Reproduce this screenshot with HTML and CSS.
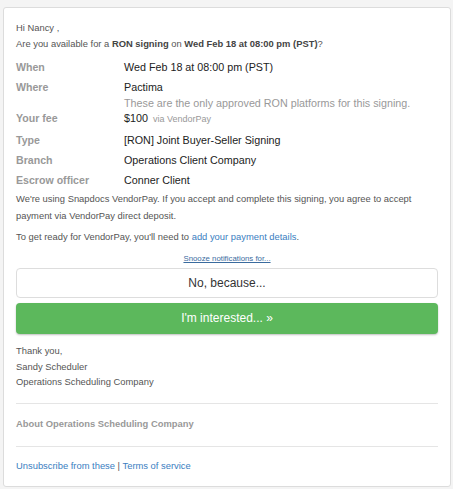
FILE: index.html
```html
<!DOCTYPE html>
<html>
<head>
<meta charset="utf-8">
<link rel="stylesheet" href="styles.css">
</head>
<body>
<div class="card">
  <p class="greet">Hi Nancy ,</p>
  <p class="ask">Are you available for a <b>RON signing</b> on <b>Wed Feb 18 at 08:00 pm (PST)</b>?</p>
  <div class="details">
    <div class="label">When</div><div class="value">Wed Feb 18 at 08:00 pm (PST)</div>
    <div class="label">Where</div><div class="value">Pactima</div>
    <div class="label note-row"></div><div class="note note-row">These are the only approved RON platforms for this signing.</div>
    <div class="label fee-row">Your fee</div><div class="value fee-row">$100 <span class="via">via VendorPay</span></div>
    <div class="label type-row">Type</div><div class="value type-row">[RON] Joint Buyer-Seller Signing</div>
    <div class="label">Branch</div><div class="value">Operations Client Company</div>
    <div class="label">Escrow officer</div><div class="value">Conner Client</div>
  </div>
  <p class="para">We're using Snapdocs VendorPay. If you accept and complete this signing, you agree to accept payment via VendorPay direct deposit.</p>
  <p class="para2">To get ready for VendorPay, you'll need to <a class="link" href="#">add your payment details</a>.</p>
  <div class="snooze"><a href="#">Snooze notifications for...</a></div>
  <div class="btn btn-no">No, because...</div>
  <div class="btn btn-yes">I'm interested... »</div>
  <div class="sign">
    <div>Thank you,</div>
    <div>Sandy Scheduler</div>
    <div>Operations Scheduling Company</div>
  </div>
  <hr class="rule rule-top">
  <div class="about">About Operations Scheduling Company</div>
  <hr class="rule rule-bottom">
  <div class="foot"><a class="link" href="#">Unsubscribe from these</a> | <a class="link" href="#">Terms of service</a></div>
</div>
</body>
</html>
```
FILE: styles.css
```css
html, body {
  margin: 0;
  padding: 0;
  background: #f4f4f4;
}
body {
  font-family: "Liberation Sans", Arial, sans-serif;
  padding: 7px 2px 2px 3px;
}
.card {
  background: #fff;
  border: 1px solid #dcdcdc;
  border-radius: 3px;
  padding: 12px 12px 12px 12px;
  color: #555;
  font-size: 9.4px;
}
p { margin: 0; }
.greet { line-height: 16px; }
.ask { line-height: 16px; }
.ask b { color: #444; }
.details {
  display: grid;
  grid-template-columns: 108px 1fr;
  margin-top: 5px;
}
.label {
  font-weight: bold;
  color: #999;
  font-size: 10.6px;
  line-height: 20px;
}
.value {
  color: #222;
  font-size: 10.75px;
  line-height: 20px;
}
.note {
  color: #999;
  font-size: 10.75px;
  line-height: 12px;
}
.note-row { line-height: 12px; }
.fee-row { line-height: 18px; }
.type-row { padding-top: 2px; }
.via {
  color: #999;
  font-size: 9px;
  margin-left: 2px;
}
.para {
  line-height: 17px;
}
.para2 {
  line-height: 17px;
  margin-top: 4px;
}
.link { color: #3a7ec1; text-decoration: none; }
.snooze {
  text-align: center;
  font-size: 7.8px;
  margin-top: 8px;
  line-height: 12px;
}
.snooze a { color: #3a6b9e; text-decoration: underline; }
.btn {
  border-radius: 4px;
  text-align: center;
  font-size: 12px;
  box-sizing: border-box;
}
.btn-no {
  margin-top: 3px;
  height: 30px;
  line-height: 28px;
  border: 1px solid #ddd;
  color: #333;
}
.btn-yes {
  margin-top: 5px;
  height: 31px;
  line-height: 31px;
  background: #5cb85c;
  color: #fff;
  box-shadow: 0 1px 2px rgba(0,0,0,0.25);
}
.sign {
  margin-top: 9px;
  line-height: 15.5px;
}
.rule {
  border: 0;
  border-top: 1px solid #e5e5e5;
  margin: 0;
}
.rule-top { margin-top: 13px; }
.about {
  font-weight: bold;
  color: #999;
  margin-top: 12px;
  line-height: 16px;
}
.rule-bottom { margin-top: 14px; }
.foot {
  margin-top: 11px;
  line-height: 16px;
}
```
